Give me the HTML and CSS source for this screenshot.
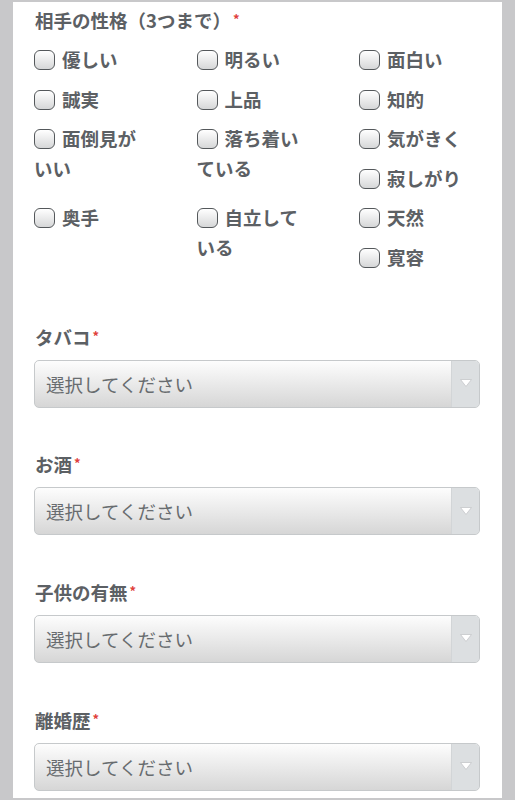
FILE: index.html
```html
<!DOCTYPE html>
<html lang="ja">
<head>
<meta charset="utf-8">
<title>プロフィール</title>
<link rel="stylesheet" href="styles.css">
</head>
<body>
<form class="card">
  <div class="field">
    <div class="label">相手の性格（3つまで）<span class="req">*</span></div>
    <ul class="checks">
      <li><span class="box"></span>優しい</li>
      <li><span class="box"></span>明るい</li>
      <li><span class="box"></span>面白い</li>
      <li><span class="box"></span>誠実</li>
      <li><span class="box"></span>上品</li>
      <li><span class="box"></span>知的</li>
      <li><span class="box"></span>面倒見がいい</li>
      <li><span class="box"></span>落ち着いている</li>
      <li><span class="box"></span>気がきく</li>
      <li><span class="box"></span>寂しがり</li>
      <li><span class="box"></span>奥手</li>
      <li><span class="box"></span>自立している</li>
      <li><span class="box"></span>天然</li>
      <li><span class="box"></span>寛容</li>
    </ul>
  </div>

  <div class="field select-field">
    <div class="label">タバコ<span class="req">*</span></div>
    <div class="select"><span class="select-text">選択してください</span><span class="select-arrow"><svg width="12" height="8" viewBox="0 0 12 8"><polygon points="0.5,0.5 11.5,0.5 6,7.5" fill="#ffffff" stroke="#c4c7c9" stroke-width="0.8"/></svg></span></div>
  </div>

  <div class="field select-field">
    <div class="label">お酒<span class="req">*</span></div>
    <div class="select"><span class="select-text">選択してください</span><span class="select-arrow"><svg width="12" height="8" viewBox="0 0 12 8"><polygon points="0.5,0.5 11.5,0.5 6,7.5" fill="#ffffff" stroke="#c4c7c9" stroke-width="0.8"/></svg></span></div>
  </div>

  <div class="field select-field">
    <div class="label">子供の有無<span class="req">*</span></div>
    <div class="select"><span class="select-text">選択してください</span><span class="select-arrow"><svg width="12" height="8" viewBox="0 0 12 8"><polygon points="0.5,0.5 11.5,0.5 6,7.5" fill="#ffffff" stroke="#c4c7c9" stroke-width="0.8"/></svg></span></div>
  </div>

  <div class="field select-field last">
    <div class="label">離婚歴<span class="req">*</span></div>
    <div class="select"><span class="select-text">選択してください</span><span class="select-arrow"><svg width="12" height="8" viewBox="0 0 12 8"><polygon points="0.5,0.5 11.5,0.5 6,7.5" fill="#ffffff" stroke="#c4c7c9" stroke-width="0.8"/></svg></span></div>
  </div>
</form>
</body>
</html>
```

FILE: styles.css
```css
html, body {
  margin: 0;
  padding: 0;
  background: #c8c8ca;
}

body {
  font-family: "Noto Sans CJK JP", "Noto Sans", sans-serif;
  font-size: 18.5px;
  color: #5c6064;
}

.card {
  margin: 2px 13px 0;
  padding: 2px 22px 7px 21px;
  background: #ffffff;
  overflow: hidden;
}

.label {
  font-weight: 700;
  line-height: 30px;
  height: 30px;
  padding-left: 1px;
  white-space: nowrap;
}

.req {
  color: #e0403c;
  font-size: 13px;
  vertical-align: 4px;
  margin-left: 2px;
}

.checks {
  list-style: none;
  margin: 10px -44px 0 0;
  padding: 0;
  overflow: hidden;
}

.checks li {
  float: left;
  width: 118.5px;
  margin: 0 44px 9.6px 0;
  line-height: 30px;
  font-weight: 700;
}

.box {
  display: inline-block;
  box-sizing: border-box;
  width: 21px;
  height: 20px;
  margin-right: 7px;
  border: 1px solid #54585b;
  border-radius: 6px;
  background: linear-gradient(#ffffff, #d6d7d8);
  vertical-align: -3px;
}

.select-field {
  margin-top: 39px;
}

.select-field + .select-field {
  margin-top: 40.7px;
}

.select-field .select {
  margin-top: 9px;
}

.select {
  display: flex;
  height: 48px;
  box-sizing: border-box;
  border: 1px solid #c6c9cb;
  border-radius: 5px;
  overflow: hidden;
  background: linear-gradient(#fdfdfd, #d6d6d6);
}

.select-text {
  flex: 1;
  padding-left: 11px;
  line-height: 46px;
  color: #686c6f;
  font-weight: 400;
}

.select-arrow {
  width: 27px;
  display: flex;
  align-items: center;
  justify-content: center;
  border-left: 1px solid #d2d5d7;
  background: #dcdfe1;
}

.select-arrow svg {
  display: block;
  margin-top: -1px;
}
```
